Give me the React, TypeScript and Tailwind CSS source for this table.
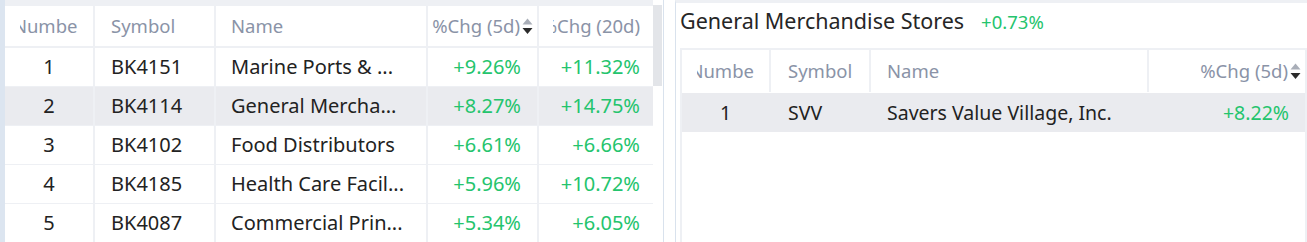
import React from "react";

const rows = [
  { n: 1, sym: "BK4151", name: "Marine Ports & ...", c5: "+9.26%", c20: "+11.32%" },
  { n: 2, sym: "BK4114", name: "General Mercha...", c5: "+8.27%", c20: "+14.75%", hi: true },
  { n: 3, sym: "BK4102", name: "Food Distributors", c5: "+6.61%", c20: "+6.66%" },
  { n: 4, sym: "BK4185", name: "Health Care Facil...", c5: "+5.96%", c20: "+10.72%" },
  { n: 5, sym: "BK4087", name: "Commercial Prin...", c5: "+5.34%", c20: "+6.05%" },
];

const SortIcon = () => (
  <svg width="11" height="17" viewBox="0 0 11 17" className="shrink-0">
    <path d="M5.5 0.5 L10.5 6.5 L0.5 6.5 Z" fill="#a9aeb8" />
    <path d="M0.5 10 L10.5 10 L5.5 16 Z" fill="#2b2b2b" />
  </svg>
);

const leftCols = "grid grid-cols-[88px_119px_210px_109px_114px] gap-x-[2px]";
const rightCols = "grid grid-cols-[87px_98px_276px_156px] gap-x-[2px]";

export default function App() {
  return (
    <div className="flex h-[242px] w-[1307px] overflow-hidden bg-white font-['Noto_Sans',sans-serif]">
      {/* left list */}
      <div className="flex w-[664px] shrink-0 border-l-[5px] border-r border-l-[#dce5f0] border-r-[#d9e2ed]">
        <div className="flex w-[648px] shrink-0 flex-col border-t-[6px] border-[#eef0f4] bg-[#eef0f4]">
          <div className={`${leftCols} h-[40px] text-[18.5px] text-[#8a93a7]`}>
            <div className="flex items-center justify-center overflow-hidden bg-white px-[15px]">
              <span className="flex w-full justify-center overflow-hidden whitespace-nowrap">
                <span className="shrink-0">Number</span>
              </span>
            </div>
            <div className="flex items-center bg-white pl-[16px]">Symbol</div>
            <div className="flex items-center bg-white pl-[15px]">Name</div>
            <div className="flex items-center justify-end gap-[2px] overflow-hidden bg-white pl-[4px] pr-[4px]">
              <span className="flex min-w-0 flex-1 justify-end overflow-hidden whitespace-nowrap">
                <span className="shrink-0">%Chg (5d)</span>
              </span>
              <SortIcon />
            </div>
            <div className="flex items-center overflow-hidden bg-white pl-[14px] pr-[13px]">
              <span className="flex w-full justify-end overflow-hidden whitespace-nowrap">
                <span className="shrink-0">%Chg (20d)</span>
              </span>
            </div>
          </div>
          <div className="mt-[2px] flex flex-col gap-y-[1px]">
            {rows.map((r) => (
              <div
                key={r.n}
                className={`${leftCols} h-[38px] text-[20px] text-[#222]`}
              >
                <div className={`flex items-center justify-center ${r.hi ? "bg-[#eaebef]" : "bg-white"}`}>{r.n}</div>
                <div className={`flex items-center pl-[16px] ${r.hi ? "bg-[#eaebef]" : "bg-white"}`}>{r.sym}</div>
                <div className={`flex items-center whitespace-nowrap pl-[15px] ${r.hi ? "bg-[#eaebef]" : "bg-white"}`}>{r.name}</div>
                <div className={`flex items-center justify-end pr-[16px] text-[#24c46d] ${r.hi ? "bg-[#eaebef]" : "bg-white"}`}>{r.c5}</div>
                <div className={`flex items-center justify-end pr-[13px] text-[#24c46d] ${r.hi ? "bg-[#eaebef]" : "bg-white"}`}>{r.c20}</div>
              </div>
            ))}
          </div>
        </div>
        <div className="w-[9px] shrink-0">
          <div className="mt-[5px] h-[81px] bg-[#e3e5e9]" />
        </div>
      </div>

      {/* right detail */}
      <div className="ml-[11px] flex flex-1 flex-col border-l border-t-[3px] border-l-[#d9e2ed] border-t-[#eef0f4]">
        <div className="flex h-[37px] items-center gap-[17px] pl-[4px]">
          <span className="text-[21.5px] text-[#262626]">General Merchandise Stores</span>
          <span className="text-[18.5px] text-[#24c46d]">+0.73%</span>
        </div>
        <div className="ml-[4px] mt-[8px] flex flex-1 flex-col border-x-2 border-t-2 border-[#eef0f4]">
          <div className={`${rightCols} h-[42px] bg-[#eef0f4] text-[18.5px] text-[#8a93a7]`}>
            <div className="flex items-center justify-center overflow-hidden bg-white px-[15px]">
              <span className="flex w-full justify-center overflow-hidden whitespace-nowrap">
                <span className="shrink-0">Number</span>
              </span>
            </div>
            <div className="flex items-center bg-white pl-[17px]">Symbol</div>
            <div className="flex items-center bg-white pl-[16px]">Name</div>
            <div className="flex items-center justify-end gap-[2px] bg-white pr-[4px]">
              <span className="whitespace-nowrap">%Chg (5d)</span>
              <SortIcon />
            </div>
          </div>
          <div className={`${rightCols} mt-[1px] h-[39px] bg-[#eaebef] text-[19.5px] text-[#222]`}>
            <div className="flex items-center justify-center">1</div>
            <div className="flex items-center pl-[17px]">SVV</div>
            <div className="flex items-center whitespace-nowrap pl-[16px]">Savers Value Village, Inc.</div>
            <div className="flex items-center justify-end pr-[16px] text-[#24c46d]">+8.22%</div>
          </div>
        </div>
      </div>
    </div>
  );
}
